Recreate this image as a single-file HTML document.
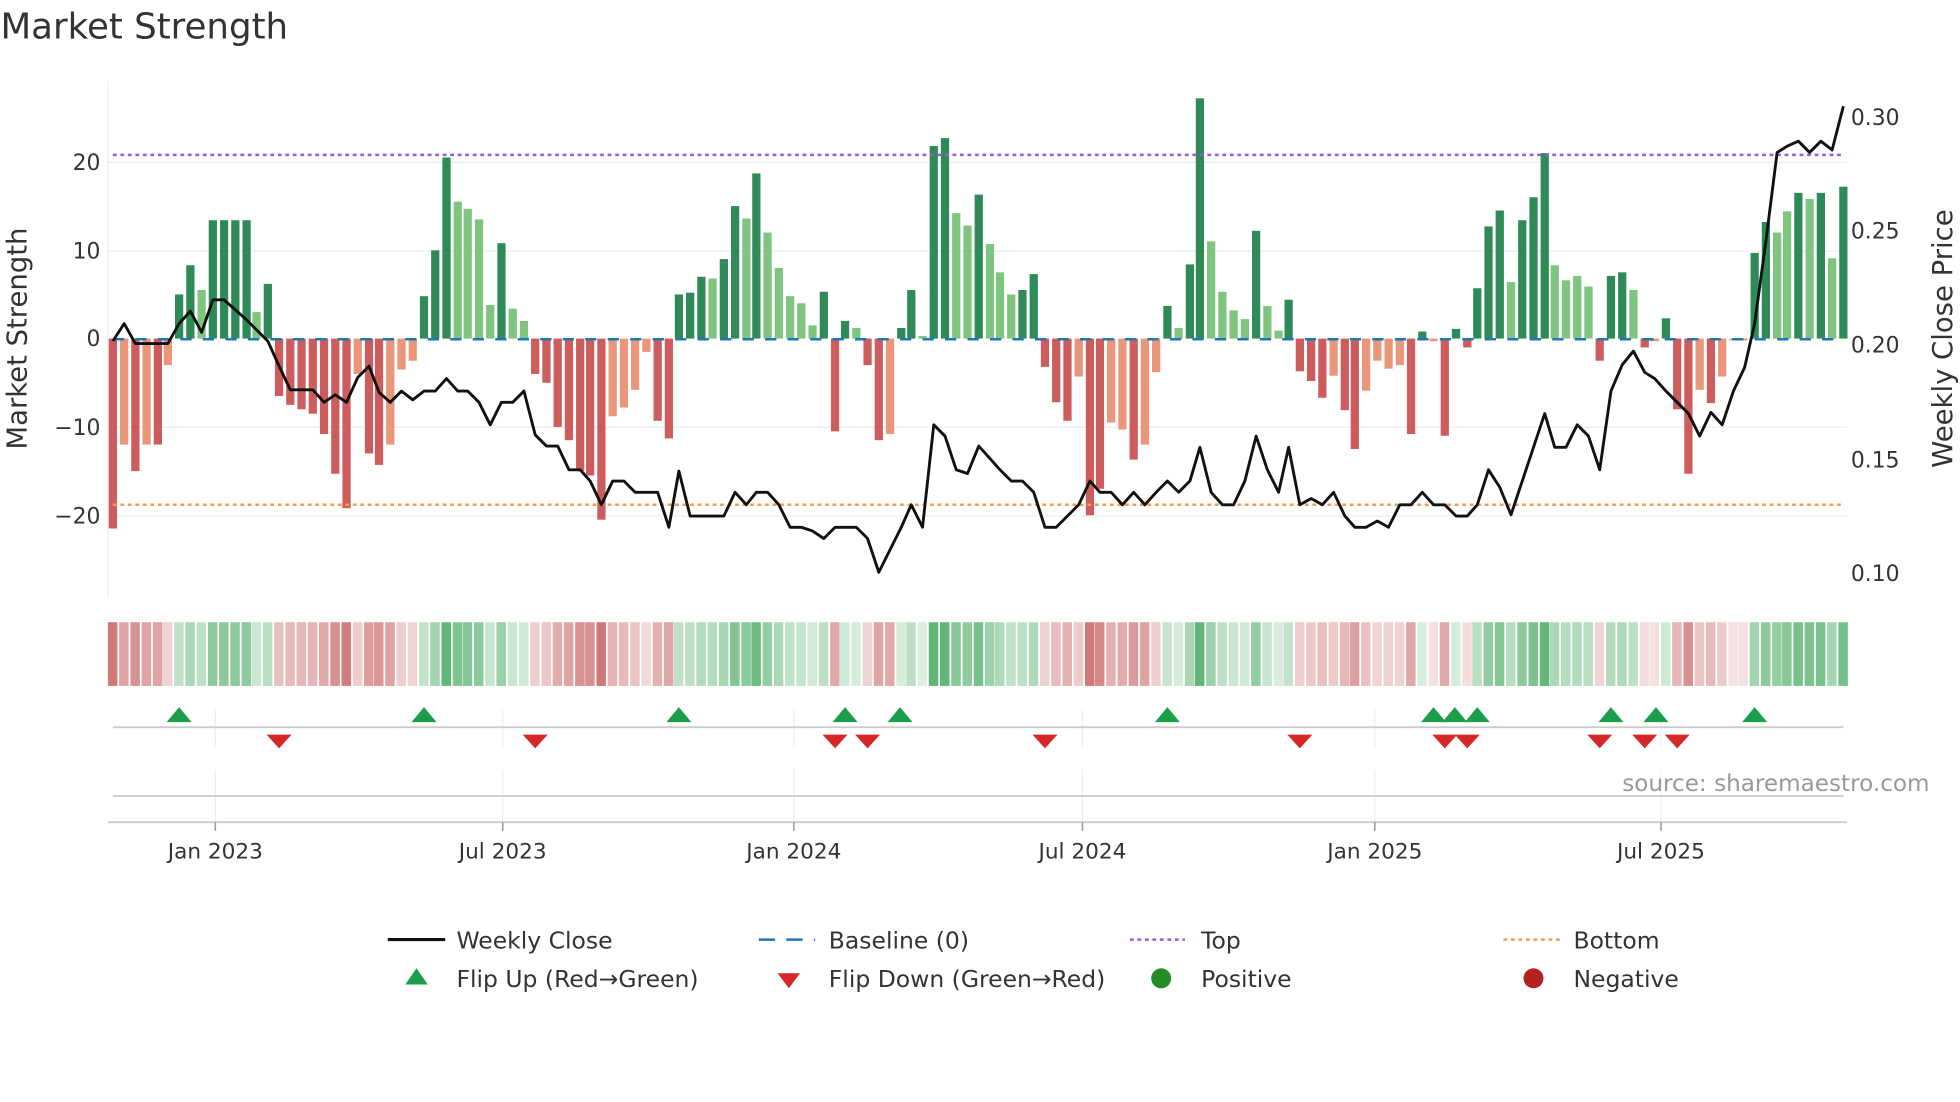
<!DOCTYPE html>
<html><head><meta charset="utf-8"><style>
html,body{margin:0;padding:0;background:#fff;width:1960px;height:1102px;overflow:hidden}
svg{display:block;font-family:"DejaVu Sans","Liberation Sans",sans-serif}
</style></head><body>
<svg id="s" width="1960" height="1102" viewBox="0 0 1568 882" xmlns="http://www.w3.org/2000/svg">
<text x="0" y="31" font-size="28.5" fill="#333">Market Strength</text>
<g stroke="#eeeef2" stroke-width="1">
<line x1="86" x2="1478" y1="130" y2="130"/><line x1="86" x2="1478" y1="201" y2="201"/>
<line x1="86" x2="1478" y1="342" y2="342"/><line x1="86" x2="1478" y1="413" y2="413"/>
<line x1="86" x2="86" y1="65" y2="478"/>
</g>
<g id="bars"></g>
<line x1="90" x2="1475" y1="271.5" y2="271.5" stroke="#1f77b4" stroke-width="2" stroke-dasharray="9,9"/>
<line x1="90" x2="1475" y1="124" y2="124" stroke="#9b59d9" stroke-width="2" stroke-dasharray="3,3"/>
<line x1="90" x2="1475" y1="404" y2="404" stroke="#f39c4f" stroke-width="2" stroke-dasharray="3,3"/>
<polyline id="price" fill="none" stroke="#111" stroke-width="2.3" stroke-linejoin="round"/>
<g font-size="17.5" fill="#333" text-anchor="end">
<text x="80" y="136">20</text><text x="80" y="207">10</text><text x="80" y="277">0</text>
<text x="80" y="348">−10</text><text x="80" y="419">−20</text></g>
<g font-size="17.5" fill="#333">
<text x="1481" y="100">0.30</text><text x="1481" y="191">0.25</text><text x="1481" y="282">0.20</text>
<text x="1481" y="374">0.15</text><text x="1481" y="465">0.10</text></g>
<text transform="translate(21,271) rotate(-90)" font-size="22" fill="#333" text-anchor="middle">Market Strength</text>
<text transform="translate(1562,271) rotate(-90)" font-size="22" fill="#333" text-anchor="middle">Weekly Close Price</text>
<g id="heat"></g>
<g stroke="#eeeef2" stroke-width="1">
<line x1="172" x2="172" y1="568" y2="598"/><line x1="402" x2="402" y1="568" y2="598"/>
<line x1="635" x2="635" y1="568" y2="598"/><line x1="866" x2="866" y1="568" y2="598"/>
<line x1="1100" x2="1100" y1="568" y2="598"/><line x1="1329" x2="1329" y1="568" y2="598"/>
<line x1="172" x2="172" y1="616" y2="658"/><line x1="402" x2="402" y1="616" y2="658"/>
<line x1="635" x2="635" y1="616" y2="658"/><line x1="866" x2="866" y1="616" y2="658"/>
<line x1="1100" x2="1100" y1="616" y2="658"/><line x1="1329" x2="1329" y1="616" y2="658"/>
</g>
<line x1="90" x2="1475" y1="582" y2="582" stroke="#ccc" stroke-width="1.5"/>
<line x1="90" x2="1475" y1="637" y2="637" stroke="#ccc" stroke-width="1.5"/>
<line x1="86" x2="1478" y1="658" y2="658" stroke="#ccc" stroke-width="1.5"/>
<g stroke="#999" stroke-width="1.2">
<line x1="172" x2="172" y1="658" y2="665"/><line x1="402" x2="402" y1="658" y2="665"/>
<line x1="635" x2="635" y1="658" y2="665"/><line x1="866" x2="866" y1="658" y2="665"/>
<line x1="1100" x2="1100" y1="658" y2="665"/><line x1="1329" x2="1329" y1="658" y2="665"/></g>
<g id="flips"></g>
<text x="1544" y="633" font-size="18.5" fill="#999" text-anchor="end">source: sharemaestro.com</text>
<g font-size="17.3" fill="#333" text-anchor="middle">
<text x="172" y="687">Jan 2023</text><text x="402" y="687">Jul 2023</text><text x="635" y="687">Jan 2024</text>
<text x="866" y="687">Jul 2024</text><text x="1100" y="687">Jan 2025</text><text x="1329" y="687">Jul 2025</text></g>
<g font-size="18.8" fill="#333">
<line x1="310" x2="356" y1="752" y2="752" stroke="#111" stroke-width="2.5"/>
<text x="365" y="759">Weekly Close</text>
<line x1="607" x2="652" y1="752" y2="752" stroke="#1f77b4" stroke-width="2" stroke-dasharray="13,9"/>
<text x="663" y="759">Baseline (0)</text>
<line x1="904" x2="948" y1="752" y2="752" stroke="#9b59d9" stroke-width="2" stroke-dasharray="3,3"/>
<text x="961" y="759">Top</text>
<line x1="1203" x2="1248" y1="752" y2="752" stroke="#f39c4f" stroke-width="2" stroke-dasharray="3,3"/>
<text x="1259" y="759">Bottom</text>
<polygon points="333,775 342,788 324,788" fill="#1a9e4a"/>
<text x="365" y="790">Flip Up (Red→Green)</text>
<polygon points="622,779 640,779 631,791" fill="#d62728"/>
<text x="663" y="790">Flip Down (Green→Red)</text>
<circle cx="929" cy="783" r="8" fill="#228b22"/>
<text x="961" y="790">Positive</text>
<circle cx="1227" cy="783" r="8" fill="#b22222"/>
<text x="1259" y="790">Negative</text>
</g>
</svg>
<script>
var B=[[90,-21.5,1],[99,-12,0],[108,-15,1],[117,-12,0],[126,-12,1],[134,-3,0],[143,5,1],[152,8.3,1],[161,5.5,0],[170,13.4,1],[179,13.4,1],[188,13.4,1],[197,13.4,1],[205,3,0],[214,6.2,1],[223,-6.5,1],[232,-7.5,1],[241,-8,1],[250,-8.5,1],[259,-10.8,1],[268,-15.3,1],[277,-19.2,1],[286,-4,0],[295,-13,1],[303,-14.3,1],[312,-12,0],[321,-3.5,0],[330,-2.5,0],[339,4.8,1],[348,10,1],[357,20.5,1],[366,15.5,0],[374,14.7,0],[383,13.5,0],[392,3.8,0],[401,10.8,1],[410,3.4,0],[419,2,0],[428,-4,1],[437,-5,1],[446,-10,1],[455,-11.5,1],[464,-15,1],[472,-15.5,1],[481,-20.5,1],[490,-8.8,0],[499,-7.8,0],[508,-5.8,0],[517,-1.5,0],[526,-9.3,1],[535,-11.3,1],[543,5,1],[552,5.2,1],[561,7,1],[570,6.8,0],[579,9,1],[588,15,1],[597,13.6,0],[605,18.7,1],[614,12,0],[623,8,0],[632,4.8,0],[641,4,0],[650,1.5,0],[659,5.3,1],[668,-10.5,1],[676,2,1],[685,1.2,0],[694,-3,1],[703,-11.5,1],[712,-10.8,0],[721,1.2,1],[729,5.5,1],[738,0.3,0],[747,21.8,1],[756,22.7,1],[765,14.2,0],[774,12.8,0],[783,16.3,1],[792,10.7,0],[800,7.5,0],[809,5,0],[818,5.5,1],[827,7.3,1],[836,-3.2,1],[845,-7.2,1],[854,-9.3,1],[863,-4.3,0],[872,-20,1],[880,-17,1],[889,-9.5,0],[898,-10.3,0],[907,-13.7,1],[916,-12,0],[925,-3.8,0],[934,3.7,1],[943,1.2,0],[952,8.4,1],[960,27.2,1],[969,11,0],[978,5.3,0],[987,3.2,0],[996,2.2,0],[1005,12.2,1],[1014,3.7,0],[1023,0.9,0],[1031,4.4,1],[1040,-3.7,1],[1049,-4.8,1],[1058,-6.7,1],[1067,-4.2,0],[1076,-8.1,1],[1084,-12.5,1],[1093,-5.9,0],[1102,-2.5,0],[1111,-3.4,0],[1120,-3,0],[1129,-10.8,1],[1138,0.8,1],[1147,-0.3,0],[1156,-11,1],[1165,1.1,1],[1174,-1,1],[1182,5.7,1],[1191,12.7,1],[1200,14.5,1],[1209,6.4,0],[1218,13.4,1],[1227,16,1],[1236,21,1],[1244,8.3,0],[1253,6.6,0],[1262,7.1,0],[1271,5.9,0],[1280,-2.5,1],[1289,7.1,1],[1298,7.5,1],[1307,5.5,0],[1316,-1,1],[1324,-0.3,0],[1333,2.3,1],[1342,-8,1],[1351,-15.3,1],[1360,-5.8,0],[1369,-7.3,1],[1378,-4.3,0],[1387,-0.2,0],[1395,-0.2,0],[1404,9.7,1],[1413,13.2,1],[1422,12,0],[1430,14.4,0],[1439,16.5,1],[1448,15.8,0],[1457,16.5,1],[1466,9.1,0],[1475,17.2,1]];
var ns="http://www.w3.org/2000/svg",g=document.getElementById('bars'),h=document.getElementById('heat');
function el(t,a,p){var e=document.createElementNS(ns,t);for(var k in a)e.setAttribute(k,a[k]);p.appendChild(e);}
B.forEach(function(b){var v=b[1],y=271-v*7.07,c;
 if(v>=0)c=b[2]?'#2e8b57':'#7fc47f';else c=b[2]?'#cd5c5c':'#e9967a';
 el('rect',{x:b[0]-3.3,width:6.6,y:Math.min(y,271),height:Math.abs(v*7.07),fill:c},g);
 var a=Math.min(1,0.22+Math.abs(v)/26);
 el('rect',{x:b[0]-4,width:7.6,y:498,height:51,fill:v>=0?'#2e9e4a':'#c04a4a','fill-opacity':(a*0.75).toFixed(2)},h);
});
var P="90,273 99,259 108,275 117,275 126,275 134,275 143,259 152,249 161,266 170,240 179,240 188,248 197,256 205,264 214,273 223,293 232,312 241,312 250,312 259,322 268,316 277,322 286,302 295,293 303,314 312,322 321,313 330,320 339,313 348,313 357,303 366,313 374,313 383,322 392,340 401,322 410,322 419,313 428,348 437,357 446,357 455,376 464,376 472,385 481,404 490,385 499,385 508,394 517,394 526,394 535,422 543,377 552,413 561,413 570,413 579,413 588,394 597,404 605,394 614,394 623,404 632,422 641,422 650,425 659,431 668,422 676,422 685,422 694,431 703,458 712,440 721,422 729,404 738,422 747,340 756,349 765,376 774,379 783,357 792,367 800,376 809,385 818,385 827,394 836,422 845,422 854,413 863,404 872,385 880,394 889,394 898,404 907,394 916,404 925,394 934,385 943,394 952,385 960,358 969,394 978,404 987,404 996,385 1005,349 1014,376 1023,394 1031,358 1040,404 1049,399 1058,404 1067,394 1076,413 1084,422 1093,422 1102,417 1111,422 1120,404 1129,404 1138,394 1147,404 1156,404 1165,413 1174,413 1182,404 1191,376 1200,390 1209,412 1218,385 1227,358 1236,331 1244,358 1253,358 1262,340 1271,349 1280,376 1289,313 1298,292 1307,281 1316,298 1324,303 1333,313 1342,322 1351,331 1360,349 1369,330 1378,340 1387,313 1396,294 1404,259 1413,193 1422,122 1430,117 1439,113 1448,122 1457,113 1466,120 1475,85";
document.getElementById('price').setAttribute('points',P);
var f=document.getElementById('flips');
[143,339,543,676,720,934,1147,1164,1182,1289,1325,1404].forEach(function(x){el('polygon',{points:(x)+',566 '+(x+10)+',578 '+(x-10)+',578',fill:'#1a9e4a'},f);});
[223,428,668,694,836,1040,1156,1174,1280,1316,1342].forEach(function(x){el('polygon',{points:(x-10)+',588 '+(x+10)+',588 '+x+',599',fill:'#d62728'},f);});
</script>
</body></html>
